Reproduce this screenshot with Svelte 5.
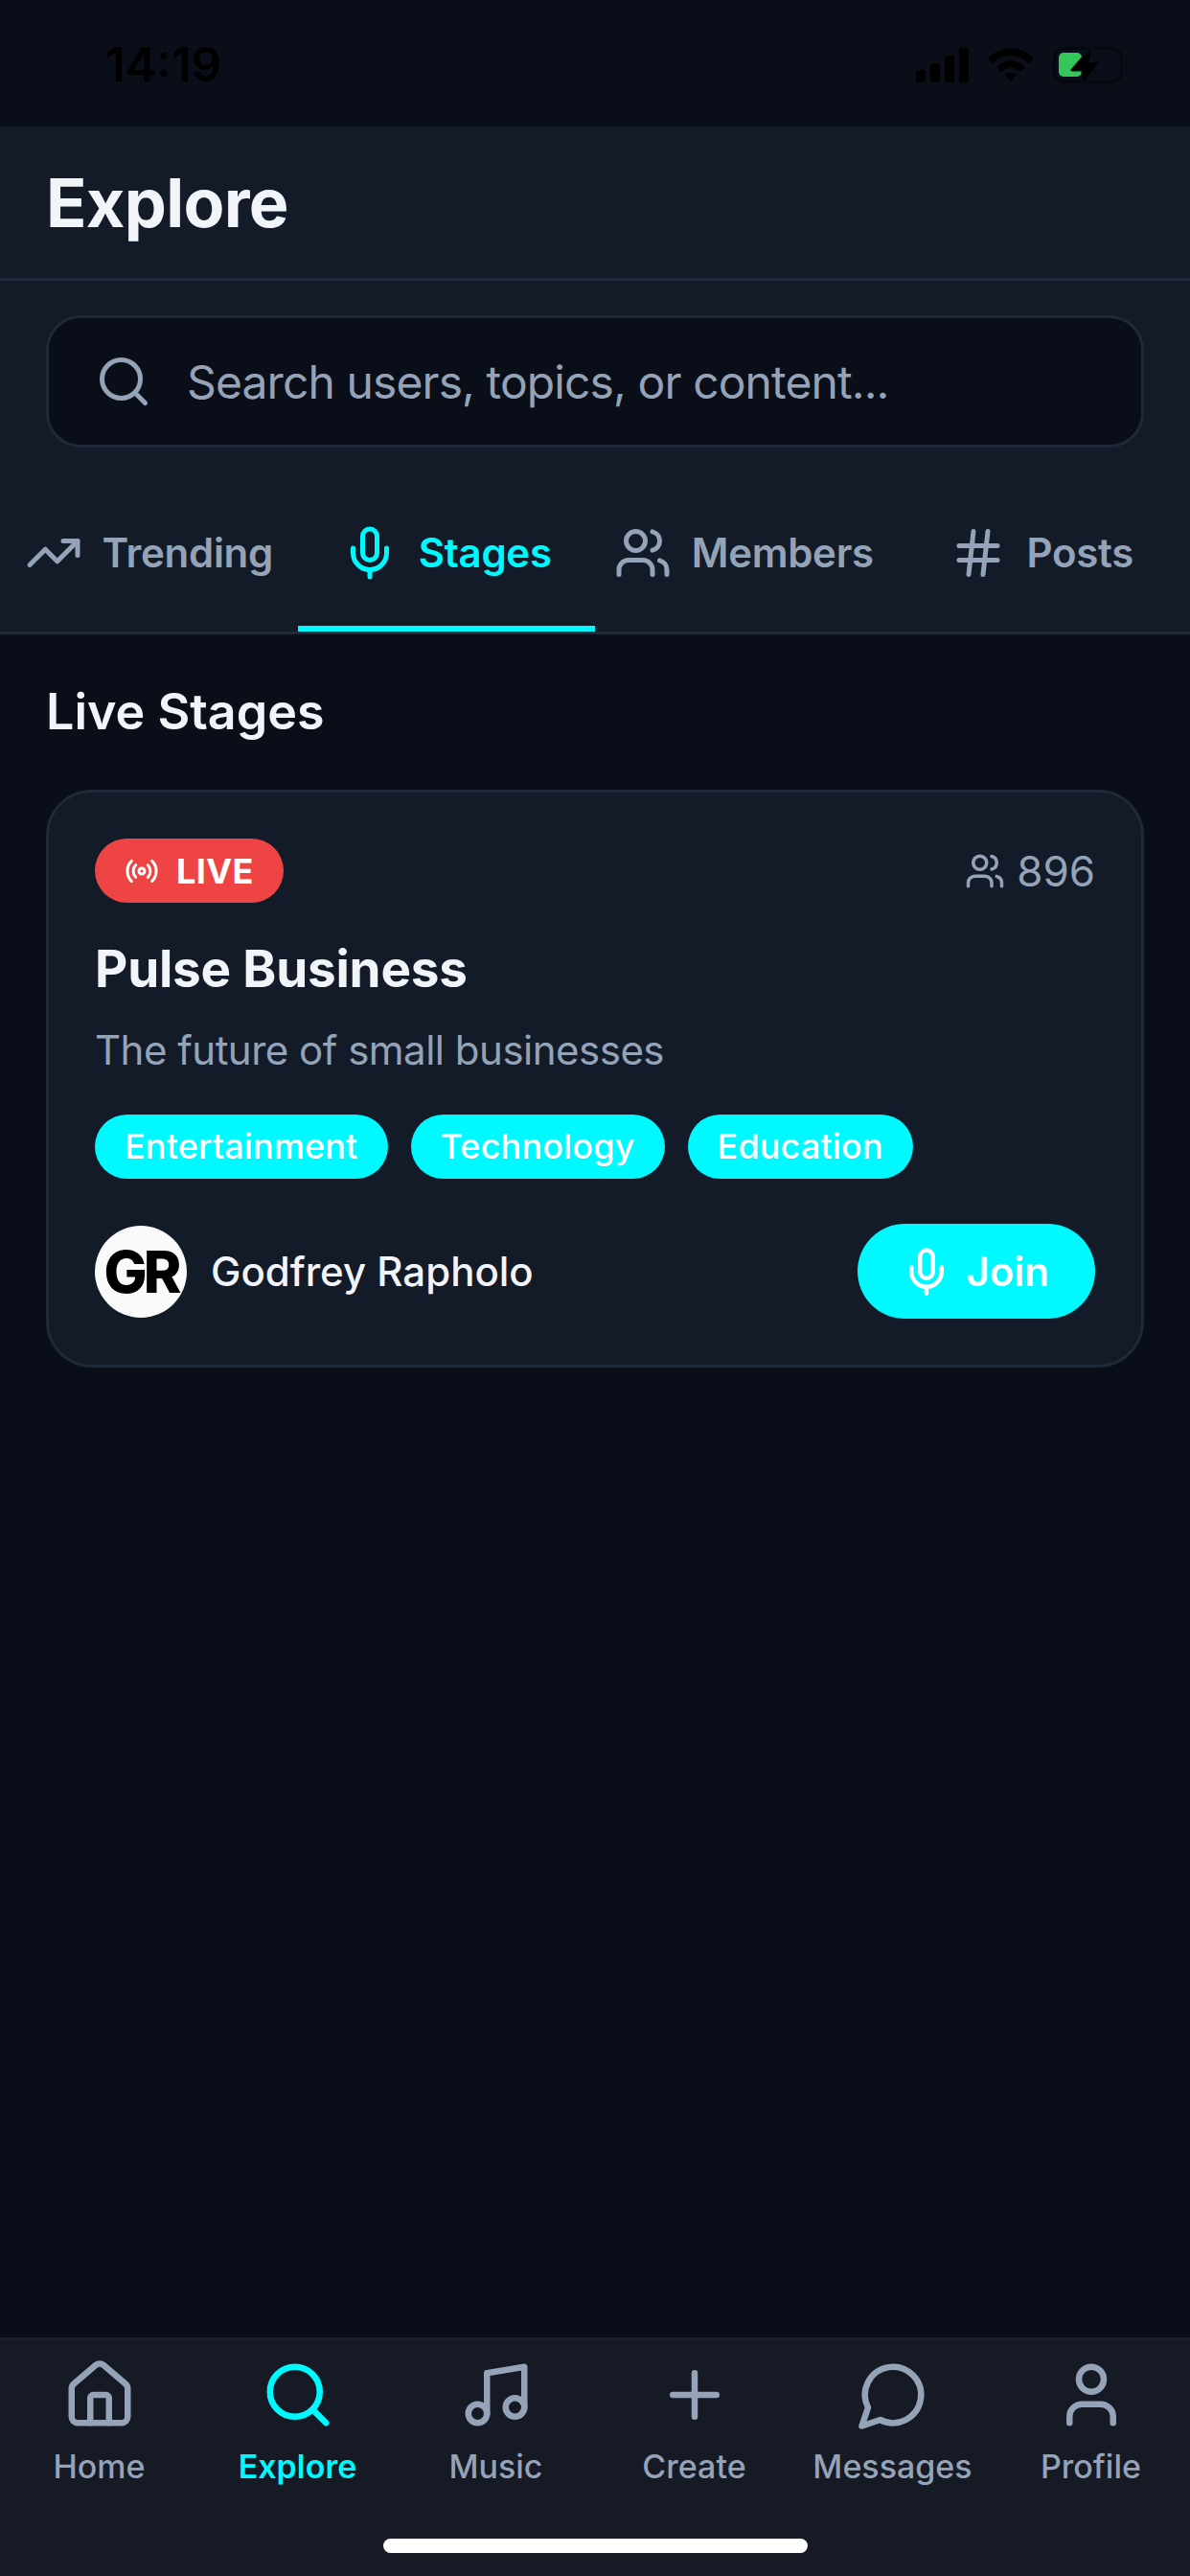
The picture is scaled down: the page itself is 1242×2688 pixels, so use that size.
<script>
  const tabs = [
    { name: 'Trending', icon: 'trending' },
    { name: 'Stages', icon: 'mic', active: true },
    { name: 'Members', icon: 'users' },
    { name: 'Posts', icon: 'hash' }
  ]
  const tags = ['Entertainment', 'Technology', 'Education']
  const nav = [
    { name: 'Home', icon: 'home' },
    { name: 'Explore', icon: 'search', active: true },
    { name: 'Music', icon: 'music' },
    { name: 'Create', icon: 'plus' },
    { name: 'Messages', icon: 'message' },
    { name: 'Profile', icon: 'user' }
  ]
</script>

{#snippet icon(name, size, stroke = 2)}
  <svg width={size} height={size} viewBox="0 0 24 24" fill="none" stroke="currentColor" stroke-width={stroke} stroke-linecap="round" stroke-linejoin="round">
    {#if name === 'trending'}
      <polyline points="22 7 13.5 15.5 8.5 10.5 2 17" /><polyline points="16 7 22 7 22 13" />
    {:else if name === 'mic'}
      <path d="M12 2a3 3 0 0 0-3 3v7a3 3 0 0 0 6 0V5a3 3 0 0 0-3-3Z" /><path d="M19 10v2a7 7 0 0 1-14 0v-2" /><line x1="12" y1="19" x2="12" y2="22" />
    {:else if name === 'users'}
      <path d="M16 21v-2a4 4 0 0 0-4-4H6a4 4 0 0 0-4 4v2" /><circle cx="9" cy="7" r="4" /><path d="M22 21v-2a4 4 0 0 0-3-3.87" /><path d="M16 3.13a4 4 0 0 1 0 7.75" />
    {:else if name === 'hash'}
      <line x1="4" y1="9" x2="20" y2="9" /><line x1="4" y1="15" x2="20" y2="15" /><line x1="10" y1="3" x2="8" y2="21" /><line x1="16" y1="3" x2="14" y2="21" />
    {:else if name === 'search'}
      <circle cx="11" cy="11" r="8" /><path d="m21 21-4.3-4.3" />
    {:else if name === 'radio'}
      <path d="M4.9 19.1C1 15.2 1 8.8 4.9 4.9" /><path d="M7.8 16.2c-2.3-2.3-2.3-6.1 0-8.5" /><circle cx="12" cy="12" r="2" /><path d="M16.2 7.8c2.3 2.3 2.3 6.1 0 8.5" /><path d="M19.1 4.9C23 8.8 23 15.1 19.1 19" />
    {:else if name === 'home'}
      <path d="M15 21v-8a1 1 0 0 0-1-1h-4a1 1 0 0 0-1 1v8" /><path d="M3 10a2 2 0 0 1 .709-1.528l7-5.999a2 2 0 0 1 2.582 0l7 5.999A2 2 0 0 1 21 10v9a2 2 0 0 1-2 2H5a2 2 0 0 1-2-2z" />
    {:else if name === 'music'}
      <path d="M9 18V5l12-2v13" /><circle cx="6" cy="18" r="3" /><circle cx="18" cy="16" r="3" />
    {:else if name === 'plus'}
      <path d="M5 12h14" /><path d="M12 5v14" />
    {:else if name === 'message'}
      <path d="M7.9 20A9 9 0 1 0 4 16.1L2 22Z" />
    {:else if name === 'user'}
      <path d="M19 21v-2a4 4 0 0 0-4-4H9a4 4 0 0 0-4 4v2" /><circle cx="12" cy="7" r="4" />
    {/if}
  </svg>
{/snippet}

<div class="screen">
  <div class="status">
    <span class="time">14:19</span>
    <div class="status-icons">
      <svg width="56" height="36" viewBox="0 0 56 36" fill="#000">
        <rect x="1" y="23" width="10" height="13" rx="3" />
        <rect x="16" y="16" width="10" height="20" rx="3" />
        <rect x="31" y="8" width="10" height="28" rx="3" />
        <rect x="46" y="0" width="10" height="36" rx="3" />
      </svg>
      <svg width="48" height="36" viewBox="0 0 48 36" fill="#000">
        <path d="M0 11 C14 -3 34 -3 48 11 L43 16 C31 5 17 5 5 16 Z" />
        <path d="M9 20 C18 11 30 11 39 20 L34 25 C27 19 21 19 14 25 Z" />
        <path d="M18 28 C21 25 27 25 30 28 L24 35 Z" />
      </svg>
      <svg width="80" height="40" viewBox="0 0 80 40">
        <rect x="1.5" y="2.5" width="70" height="35" rx="10" fill="none" stroke="#05080f" stroke-width="3" />
        <path d="M75 14 c3 2 3 10 0 12 Z" fill="#05080f" />
        <rect x="6" y="7" width="24" height="25" rx="5" fill="#34c759" />
        <path d="M41 1 L20 25 L31 25 L31 38 L48 17 L37 17 Z" fill="#000" stroke="#0a0e19" stroke-width="3" stroke-linejoin="round" paint-order="stroke" />
      </svg>
    </div>
  </div>

  <header class="header"><h1>Explore</h1></header>

  <div class="explore-top">
    <div class="search">
      <span class="search-icon">{@render icon('search', 60)}</span>
      <span class="placeholder">Search users, topics, or content...</span>
    </div>
    <div class="tabs">
      {#each tabs as tab}
        <div class="tab" class:active={tab.active}>
          {@render icon(tab.icon, 60)}
          <span>{tab.name}</span>
        </div>
      {/each}
    </div>
  </div>

  <main class="main">
    <h2>Live Stages</h2>
    <section class="card">
      <div class="card-top">
        <span class="live">{@render icon('radio', 36)}LIVE</span>
        <span class="count">{@render icon('users', 42)}896</span>
      </div>
      <h3>Pulse Business</h3>
      <p>The future of small businesses</p>
      <div class="tags">
        {#each tags as tag}
          <span class="tag">{tag}</span>
        {/each}
      </div>
      <div class="card-foot">
        <div class="host">
          <div class="avatar">GR</div>
          <span>Godfrey Rapholo</span>
        </div>
        <div class="join">{@render icon('mic', 54)}Join</div>
      </div>
    </section>
  </main>

  <nav class="nav">
    <div class="nav-items">
      {#each nav as item}
        <div class="nav-item" class:active={item.active}>
          {@render icon(item.icon, 78)}
          <span>{item.name}</span>
        </div>
      {/each}
    </div>
    <div class="home-bar"></div>
  </nav>
</div>

<style>
  :global(body) {
    margin: 0;
    background: #0a0e19;
  }
  .screen {
    width: 1242px;
    height: 2688px;
    display: flex;
    flex-direction: column;
    overflow: hidden;
    font-family: Inter, "Liberation Sans", sans-serif;
    color: #f1f5f9;
    background: #0a0e19;
  }
  svg {
    display: block;
    flex-shrink: 0;
  }
  .status {
    height: 132px;
    flex-shrink: 0;
    display: flex;
    align-items: center;
    justify-content: space-between;
    padding: 3px 63px 0 110px;
    box-sizing: border-box;
  }
  .time {
    font-size: 49px;
    font-weight: 600;
    color: #000;
  }
  .status-icons {
    display: flex;
    align-items: center;
    gap: 20px;
  }
  .header {
    height: 161px;
    flex-shrink: 0;
    box-sizing: border-box;
    background: #131b28;
    border-bottom: 3px solid #1f2937;
    display: flex;
    align-items: center;
    padding: 0 48px;
  }
  h1 {
    margin: 0;
    font-size: 70px;
    font-weight: 700;
    letter-spacing: -0.7px;
  }
  .explore-top {
    background: #131b28;
    border-bottom: 3px solid #1f2937;
    padding-top: 36px;
  }
  .search {
    margin: 0 48px;
    height: 138px;
    box-sizing: border-box;
    background: #0a0e19;
    border: 3px solid #1f2937;
    border-radius: 36px;
    display: flex;
    align-items: center;
    padding: 0 48px;
    gap: 36px;
  }
  .search-icon {
    color: #94a3b8;
  }
  .placeholder {
    font-size: 48px;
    letter-spacing: -0.9px;
    color: #94a3b8;
  }
  .tabs {
    display: flex;
    height: 192px;
  }
  .tab {
    flex: 1;
    display: flex;
    align-items: center;
    justify-content: center;
    gap: 21px;
    font-size: 42px;
    font-weight: 600;
    letter-spacing: -0.3px;
    color: #94a3b8;
    box-sizing: border-box;
    border-bottom: 6px solid transparent;
    padding-top: 33px;
  }
  .tab.active {
    color: #00f9ff;
    border-bottom-color: #00f9ff;
  }
  .main {
    flex: 1;
    padding: 48px;
  }
  h2 {
    margin: 0 0 48px;
    font-size: 52px;
    font-weight: 600;
    line-height: 66px;
  }
  .card {
    box-sizing: border-box;
    height: 603px;
    background: #131b28;
    border: 3px solid #1f2937;
    border-radius: 48px;
    padding: 48px;
  }
  .card-top {
    display: flex;
    justify-content: space-between;
    align-items: center;
  }
  .live {
    height: 67px;
    box-sizing: border-box;
    padding: 0 31px;
    background: #ef4444;
    border-radius: 34px;
    display: flex;
    align-items: center;
    gap: 18px;
    font-size: 36px;
    font-weight: 700;
    color: #fff;
    letter-spacing: 0.4px;
  }
  .count {
    display: flex;
    align-items: center;
    gap: 12px;
    font-size: 44px;
    color: #94a3b8;
  }
  h3 {
    margin: 36px 0 0;
    font-size: 53px;
    font-weight: 700;
    letter-spacing: -0.2px;
    line-height: 66px;
  }
  p {
    margin: 25px 0 0;
    font-size: 42px;
    letter-spacing: -0.5px;
    color: #94a3b8;
    line-height: 54px;
  }
  .tags {
    display: flex;
    gap: 24px;
    margin-top: 40px;
  }
  .tag {
    height: 67px;
    line-height: 67px;
    padding: 0 31px;
    background: #00f9ff;
    border-radius: 34px;
    font-size: 36px;
    font-weight: 500;
    letter-spacing: 0.15px;
    color: #fff;
  }
  .card-foot {
    display: flex;
    justify-content: space-between;
    align-items: center;
    margin-top: 47px;
  }
  .host {
    display: flex;
    align-items: center;
    gap: 25px;
    font-size: 42px;
    font-weight: 500;
  }
  .avatar {
    width: 96px;
    height: 96px;
    border-radius: 50%;
    background: #fafafa;
    color: #000;
    display: flex;
    align-items: center;
    justify-content: center;
    font-size: 60px;
    font-weight: 800;
    letter-spacing: -4px;
  }
  .join {
    height: 99px;
    padding: 0 48px 0 45px;
    border-radius: 50px;
    background: #00f9ff;
    color: #fff;
    display: flex;
    align-items: center;
    gap: 14px;
    font-size: 42px;
    font-weight: 600;
  }
  .nav {
    height: 249px;
    flex-shrink: 0;
    box-sizing: border-box;
    background: #151a24;
    border-top: 3px solid #1a202c;
    display: flex;
    flex-direction: column;
    align-items: center;
  }
  .nav-items {
    display: flex;
    width: 100%;
    padding: 18px 0 0;
  }
  .nav-item {
    flex: 1;
    display: flex;
    flex-direction: column;
    align-items: center;
    gap: 15px;
    font-size: 34px;
    font-weight: 500;
    color: #94a3b8;
  }
  .nav-item.active {
    color: #00f9ff;
    font-weight: 600;
  }
  .home-bar {
    width: 443px;
    height: 15px;
    border-radius: 8px;
    background: #fff;
    margin: auto 0 24px;
  }
</style>
